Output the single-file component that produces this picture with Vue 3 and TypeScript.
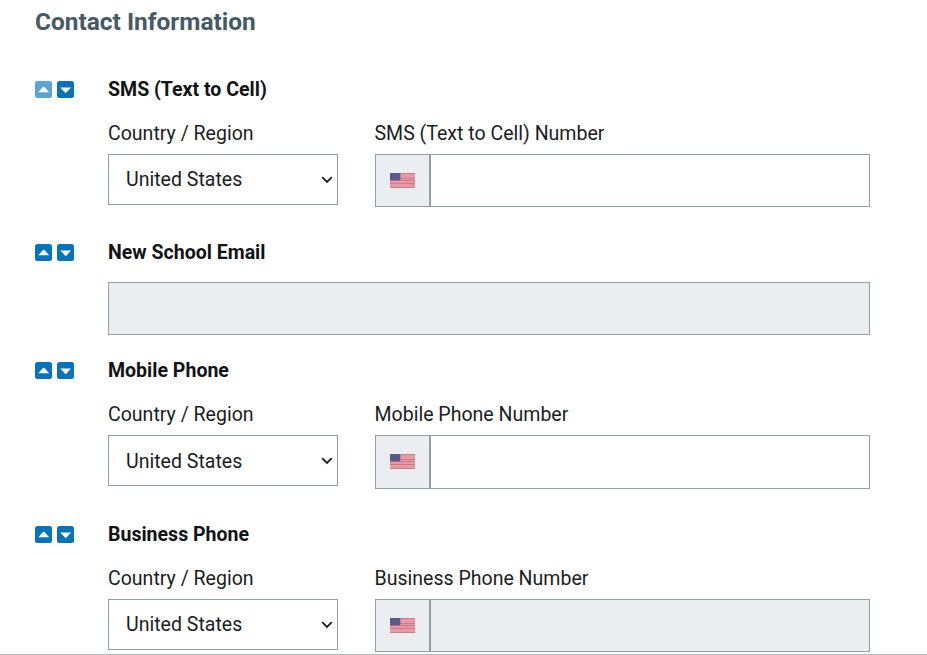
<script setup lang="ts">
import { reactive } from 'vue'

interface ContactItem {
  id: string
  title: string
  numberLabel?: string
  country: string
  value: string
  disabled: boolean
}

const items = reactive<ContactItem[]>([
  { id: 'sms', title: 'SMS (Text to Cell)', numberLabel: 'SMS (Text to Cell) Number', country: 'United States', value: '', disabled: false },
  { id: 'email', title: 'New School Email', country: '', value: '', disabled: true },
  { id: 'mobile', title: 'Mobile Phone', numberLabel: 'Mobile Phone Number', country: 'United States', value: '', disabled: false },
  { id: 'business', title: 'Business Phone', numberLabel: 'Business Phone Number', country: 'United States', value: '', disabled: true },
])

function move(index: number, step: number): void {
  const target = index + step
  if (target < 0 || target >= items.length) return
  const [item] = items.splice(index, 1)
  items.splice(target, 0, item)
}
</script>

<template>
  <main class="page">
    <h1 class="page-title">Contact Information</h1>
    <section v-for="(item, i) in items" :key="item.id" class="item" :class="{ single: !item.numberLabel }">
      <div class="order">
        <button type="button" class="move" :disabled="i === 0" @click="move(i, -1)">
          <svg viewBox="0 0 18 18"><path d="M3.4 11.6 8.2 6.3Q9 5.5 9.8 6.3L14.6 11.6Z" /></svg>
        </button>
        <button type="button" class="move" @click="move(i, 1)">
          <svg viewBox="0 0 18 18"><path d="M3.4 6.6 8.2 11.9Q9 12.7 9.8 11.9L14.6 6.6Z" /></svg>
        </button>
      </div>
      <div class="content">
        <h2 class="title">{{ item.title }}</h2>
        <div v-if="item.numberLabel" class="fields">
          <div class="field">
            <label class="label" :for="item.id + '-country'">Country / Region</label>
            <div class="select-wrap">
              <select :id="item.id + '-country'" v-model="item.country" class="select">
                <option>United States</option>
              </select>
              <svg class="chevron" viewBox="0 0 12 8"><path d="M1.2 1.2 6 6 10.8 1.2" /></svg>
            </div>
          </div>
          <div class="field">
            <label class="label" :for="item.id + '-number'">{{ item.numberLabel }}</label>
            <div class="group">
              <span class="addon">
                <svg class="flag" viewBox="0 0 25 15">
                  <rect width="25" height="15" fill="#e599a4" />
                  <path d="M0 .5h25M0 5.5h25M0 7.5h25M0 10.5h25M0 14.5h25" stroke="#cf7b88" stroke-width="1" />
                  <rect width="10.3" height="7.3" fill="#58588a" />
                </svg>
              </span>
              <input :id="item.id + '-number'" v-model="item.value" class="input" type="tel" :disabled="item.disabled" />
            </div>
          </div>
        </div>
        <input v-else v-model="item.value" class="input email" type="email" :disabled="item.disabled" />
      </div>
    </section>
  </main>
</template>

<style>
body {
  margin: 0;
  background: #fff;
}
</style>

<style scoped>
.page {
  box-sizing: border-box;
  height: 655px;
  padding: 8px 57px 0 35px;
  overflow: hidden;
  border-bottom: 1px solid #b5b8ba;
  font-family: Roboto, "Liberation Sans", sans-serif;
  font-size: 19.55px;
  line-height: 24px;
  color: #1b1d1f;
}
.page-title {
  margin: 0 0 40.6px;
  font-size: 24.45px;
  font-weight: 700;
  line-height: 28px;
  color: #455a64;
}
.item {
  display: grid;
  grid-template-columns: 73px 1fr;
  margin-bottom: 33px;
}
.item.single {
  margin-bottom: 23px;
}
.order {
  display: flex;
  gap: 4.6px;
  padding-top: 4px;
}
.move {
  display: block;
  width: 17.4px;
  height: 17.4px;
  padding: 0;
  border: 0;
  border-radius: 2.5px;
  background: #0673ba;
}
.move:disabled {
  background: #5ba5d5;
}
.move svg {
  display: block;
  width: 100%;
  fill: #fff;
}
.title {
  margin: 0;
  padding-top: 1px;
  font-size: 19.55px;
  font-weight: 700;
  line-height: 24px;
  color: #111315;
}
.fields {
  display: grid;
  grid-template-columns: 230px 1fr;
  gap: 36.5px;
  margin-top: 19px;
}
.label {
  display: block;
  padding-top: 1px;
  margin-bottom: 8px;
}
.select-wrap {
  position: relative;
}
.select,
.input {
  display: block;
  box-sizing: border-box;
  width: 100%;
  border: 1px solid #90a0a9;
  border-radius: 0;
  background: #fff;
  font: inherit;
  color: inherit;
}
.select {
  height: 51px;
  padding: 2px 30px 0 17px;
  appearance: none;
}
.chevron {
  position: absolute;
  top: 22px;
  right: 5px;
  width: 12px;
  height: 8px;
  fill: none;
  stroke: #1b1d1f;
  stroke-width: 1.8;
}
.group {
  display: flex;
  height: 53.5px;
}
.addon {
  display: flex;
  flex: none;
  align-items: center;
  box-sizing: border-box;
  width: 55.5px;
  padding-left: 14.5px;
  border: 1px solid #90a0a9;
  background: #eaeef1;
}
.group .input {
  flex: 1;
  min-width: 0;
  height: auto;
}
.flag {
  width: 25px;
  height: 15px;
}
.input:disabled {
  background: #eaeef1;
}
.email {
  height: 53px;
  margin-top: 17px;
}
</style>
